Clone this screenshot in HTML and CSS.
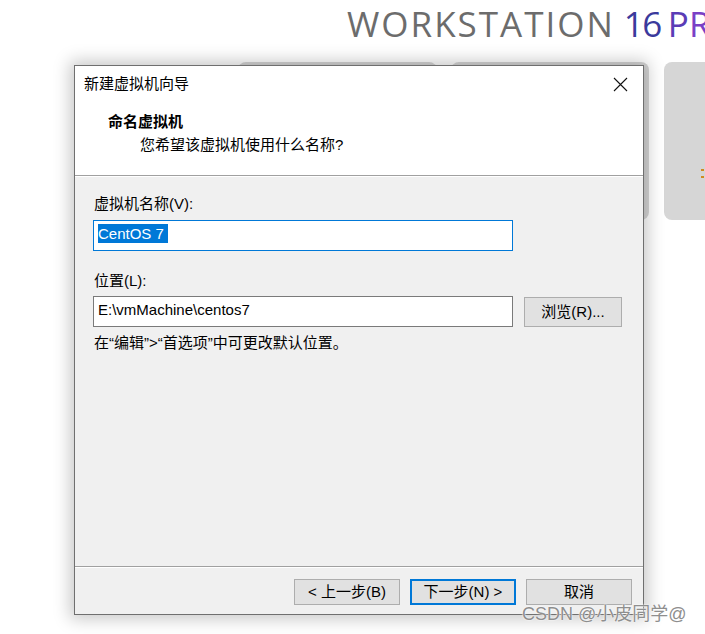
FILE: index.html
```html
<!DOCTYPE html>
<html lang="zh-CN">
<head>
<meta charset="utf-8">
<title>新建虚拟机向导</title>
<link rel="stylesheet" href="styles.css">
</head>
<body>
<div class="page">
  <header class="brand">
    <span class="brand-grey">WORKSTATION</span><span class="brand-num">16</span><span class="brand-p">P</span><span class="brand-r">R</span>
  </header>
  <div class="cards">
    <div class="card card-a"></div>
    <div class="card card-b"></div>
    <div class="card card-c"><span class="card-mark"></span></div>
  </div>

  <div class="dialog">
    <div class="dlg-head">
      <div class="titlebar">
        <span class="title">新建虚拟机向导</span>
        <svg class="close" width="15" height="15" viewBox="0 0 15 15"><path d="M1 1L14 14M14 1L1 14" stroke="#111" stroke-width="1.1" fill="none"/></svg>
      </div>
      <div class="step-title">命名虚拟机</div>
      <div class="step-sub">您希望该虚拟机使用什么名称?</div>
    </div>
    <div class="sep"></div>
    <div class="dlg-body">
      <div class="label label-first">虚拟机名称(V):</div>
      <div class="field field-focus"><span class="sel">CentOS 7 </span></div>
      <div class="label label-second">位置(L):</div>
      <div class="row">
        <div class="field">E:\vmMachine\centos7</div>
        <div class="btn btn-browse">浏览(R)...</div>
      </div>
      <div class="hint">在“编辑”&gt;“首选项”中可更改默认位置。</div>
    </div>
    <div class="sep"></div>
    <div class="dlg-foot">
      <div class="btn">&lt; 上一步(B)</div>
      <div class="btn btn-default">下一步(N) &gt;</div>
      <div class="btn">取消</div>
    </div>
  </div>

  <div class="watermark">CSDN @小皮同学@</div>
</div>
</body>
</html>
```

FILE: styles.css
```css
html, body {
  margin: 0;
  padding: 0;
  background: #ffffff;
}

.page {
  position: relative;
  width: 705px;
  height: 634px;
  overflow: hidden;
  font-family: "Liberation Sans", "Noto Sans CJK SC", sans-serif;
}

.brand {
  display: flex;
  padding: 2px 0 0 347px;
  height: 46px;
  white-space: nowrap;
  font-family: "Open Sans", "Noto Sans", sans-serif;
  font-size: 35px;
  line-height: 44px;
  color: #6c6c6c;
  box-sizing: border-box;
}

.brand-grey { letter-spacing: 2px; }
.brand-num { color: #3b3a9c; margin-left: 9px; letter-spacing: -1.5px; }
.brand-p { color: #5a3cb6; margin-left: 7px; }
.brand-r { color: #7a40c6; }

.cards {
  display: flex;
  padding-left: 238px;
  margin-top: 16px;
  gap: 14px;
}

.card {
  height: 158px;
  background: #d6d6d6;
  border-radius: 8px;
  flex: none;
}

.card-a { width: 199px; }
.card-b { width: 198px; }
.card-c { width: 60px; margin-left: 1px; position: relative; }

.card-mark {
  position: absolute;
  left: 37px;
  top: 107px;
  width: 3px;
  height: 9px;
  border-top: 2px solid #d08a20;
  border-bottom: 2px solid #d08a20;
  box-sizing: border-box;
}

.dialog {
  position: absolute;
  left: 74px;
  top: 65px;
  width: 570px;
  height: 550px;
  box-sizing: border-box;
  border: 1px solid #6f6f6f;
  background: #f0f0f0;
  box-shadow: 0 0 16px 4px rgba(0, 0, 0, 0.22);
  display: flex;
  flex-direction: column;
  color: #000;
  font-size: 15px;
}

.dlg-head {
  background: #ffffff;
  height: 109px;
  flex: none;
}

.titlebar {
  display: flex;
  align-items: center;
  justify-content: space-between;
  padding: 8px 15px 0 9px;
  height: 20px;
  line-height: 20px;
}

.title {
  font-size: 15px;
}

.close {
  display: block;
}

.step-title {
  margin-top: 18px;
  padding-left: 33px;
  font-weight: bold;
  line-height: 20px;
}

.step-sub {
  margin-top: 3px;
  padding-left: 65px;
  line-height: 20px;
}

.sep {
  flex: none;
  height: 1px;
  background: #a0a0a0;
  border-bottom: 1px solid #ffffff;
}

.dlg-body {
  flex: 1;
  padding: 17px 0 0 18px;
}

.label {
  line-height: 20px;
  padding-left: 1px;
}

.label-second {
  margin-top: 20px;
}

.field {
  margin-top: 6px;
  width: 420px;
  height: 31px;
  box-sizing: border-box;
  border: 1px solid #7a7a7a;
  background: #ffffff;
  padding: 3px 0 0 4px;
  line-height: 20px;
  white-space: pre;
}

.field-focus {
  border-color: #0078d7;
}

.sel {
  background: #0078d7;
  color: #ffffff;
  padding: 1px 0;
}

.row {
  display: flex;
  align-items: flex-start;
  gap: 11px;
  margin-top: 5px;
}

.row .field {
  margin-top: 0;
}

.btn {
  flex: none;
  width: 106px;
  height: 26px;
  box-sizing: border-box;
  border: 1px solid #adadad;
  background: #e1e1e1;
  display: flex;
  align-items: center;
  justify-content: center;
  font-size: 15px;
  line-height: 20px;
}

.btn-browse {
  width: 98px;
  height: 30px;
  margin-top: 1px;
}

.btn-default {
  border: 2px solid #0078d7;
}

.hint {
  margin-top: 6px;
  line-height: 20px;
  padding-left: 1px;
}

.dlg-foot {
  flex: none;
  height: 46px;
  display: flex;
  justify-content: flex-end;
  align-items: flex-start;
  gap: 10px;
  padding: 11px 11px 0 0;
  box-sizing: border-box;
}

.watermark {
  position: absolute;
  left: 522px;
  top: 601px;
  font-family: "Liberation Sans", "Noto Sans CJK SC", sans-serif;
  font-size: 18px;
  line-height: 26px;
  color: #8e8e8e;
  text-shadow: 0 0 2px #ffffff, 0 0 1px #ffffff;
  white-space: nowrap;
}
```
